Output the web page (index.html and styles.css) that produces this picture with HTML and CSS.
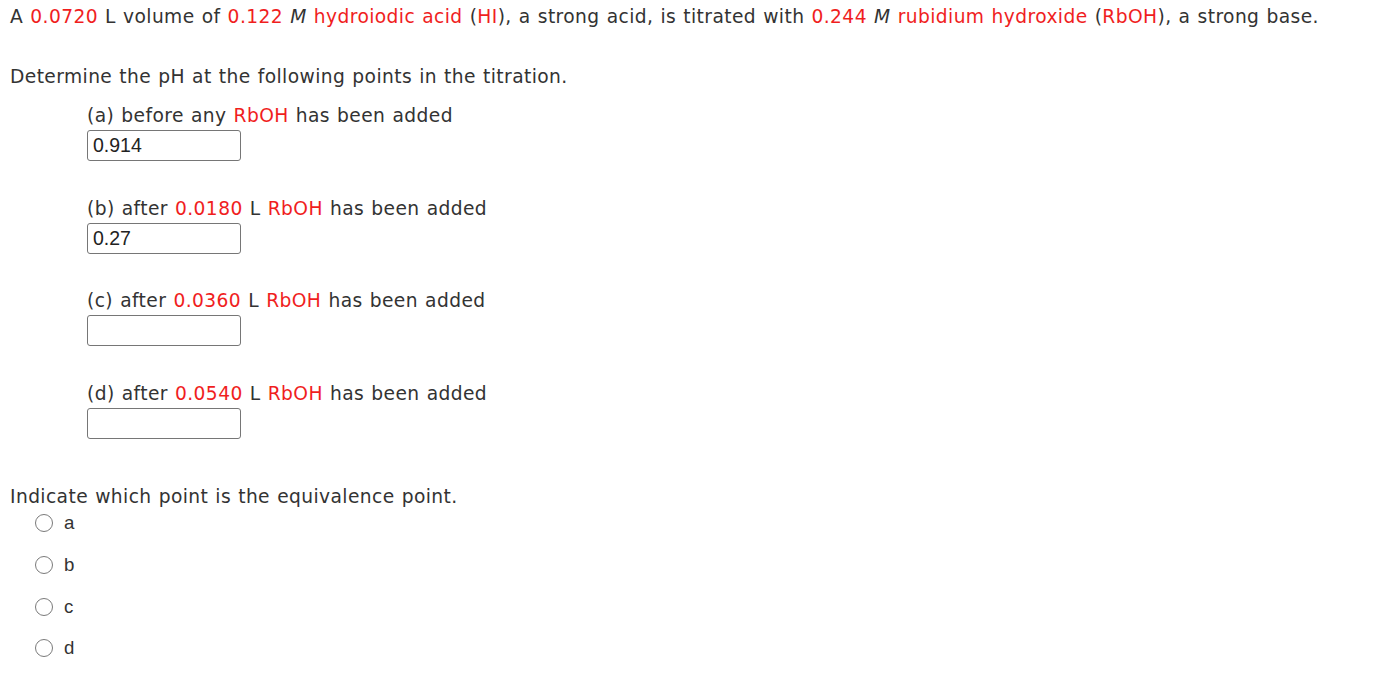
FILE: index.html
```html
<!DOCTYPE html>
<html>
<head>
<meta charset="utf-8">
<link rel="stylesheet" href="styles.css">
</head>
<body>
<div class="page">
  <p class="intro">A <span class="r">0.0720</span> L volume of <span class="r">0.122</span> <i>M</i> <span class="r">hydroiodic acid</span> (<span class="r">HI</span>), a strong acid, is titrated with <span class="r">0.244</span> <i>M</i> <span class="r">rubidium hydroxide</span> (<span class="r">RbOH</span>), a strong base.</p>
  <p class="lead">Determine the pH at the following points in the titration.</p>
  <div class="parts">
    <div class="part">
      <div class="label">(a) before any <span class="r">RbOH</span> has been added</div>
      <div class="box">0.914</div>
    </div>
    <div class="part">
      <div class="label">(b) after <span class="r">0.0180</span> L <span class="r">RbOH</span> has been added</div>
      <div class="box">0.27</div>
    </div>
    <div class="part">
      <div class="label">(c) after <span class="r">0.0360</span> L <span class="r">RbOH</span> has been added</div>
      <div class="box"></div>
    </div>
    <div class="part">
      <div class="label">(d) after <span class="r">0.0540</span> L <span class="r">RbOH</span> has been added</div>
      <div class="box"></div>
    </div>
  </div>
  <p class="lead2">Indicate which point is the equivalence point.</p>
  <div class="choices">
    <div class="choice"><span class="radio"></span><span class="opt">a</span></div>
    <div class="choice"><span class="radio"></span><span class="opt">b</span></div>
    <div class="choice"><span class="radio"></span><span class="opt">c</span></div>
    <div class="choice"><span class="radio"></span><span class="opt">d</span></div>
  </div>
</div>
</body>
</html>
```
FILE: styles.css
```css
html, body {
  margin: 0;
  padding: 0;
  background: #fff;
}
.page {
  padding: 5px 10px 0 10px;
  font-family: "DejaVu Sans", Verdana, sans-serif;
  font-size: 18.67px;
  letter-spacing: 0.4px;
  word-spacing: 0.8px;
  line-height: 24px;
  color: #333;
}
.r { color: #f01e1e; }
i { font-style: italic; }
p { margin: 0; }
.lead { margin-top: 36px; }
.parts {
  padding-left: 77px;
  margin-top: 15px;
}
.part { margin-bottom: 35.5px; }
.part:last-child { margin-bottom: 0; }
.box {
  margin-top: 2px;
  height: 29px;
  border: 1px solid #767676;
  border-radius: 3px;
  font-family: "Liberation Sans", Arial, sans-serif;
  font-size: 19.5px;
  letter-spacing: 0;
  word-spacing: 0;
  line-height: 29px;
  padding-left: 5px;
  box-sizing: content-box;
  width: 147px;
  color: #222;
}
.lead2 { margin-top: 46px; }
.choices {
  padding-left: 25px;
}
.choice {
  display: flex;
  align-items: center;
  height: 41.7px;
}
.choice:first-child { margin-top: -6px; }
.radio {
  width: 16px;
  height: 16px;
  border: 1.5px solid #7a7a7a;
  border-radius: 50%;
  margin-right: 11px;
}
.opt {
  font-family: "Liberation Sans", Arial, sans-serif;
  font-size: 18.67px;
  letter-spacing: 0;
  color: #333;
}
```
